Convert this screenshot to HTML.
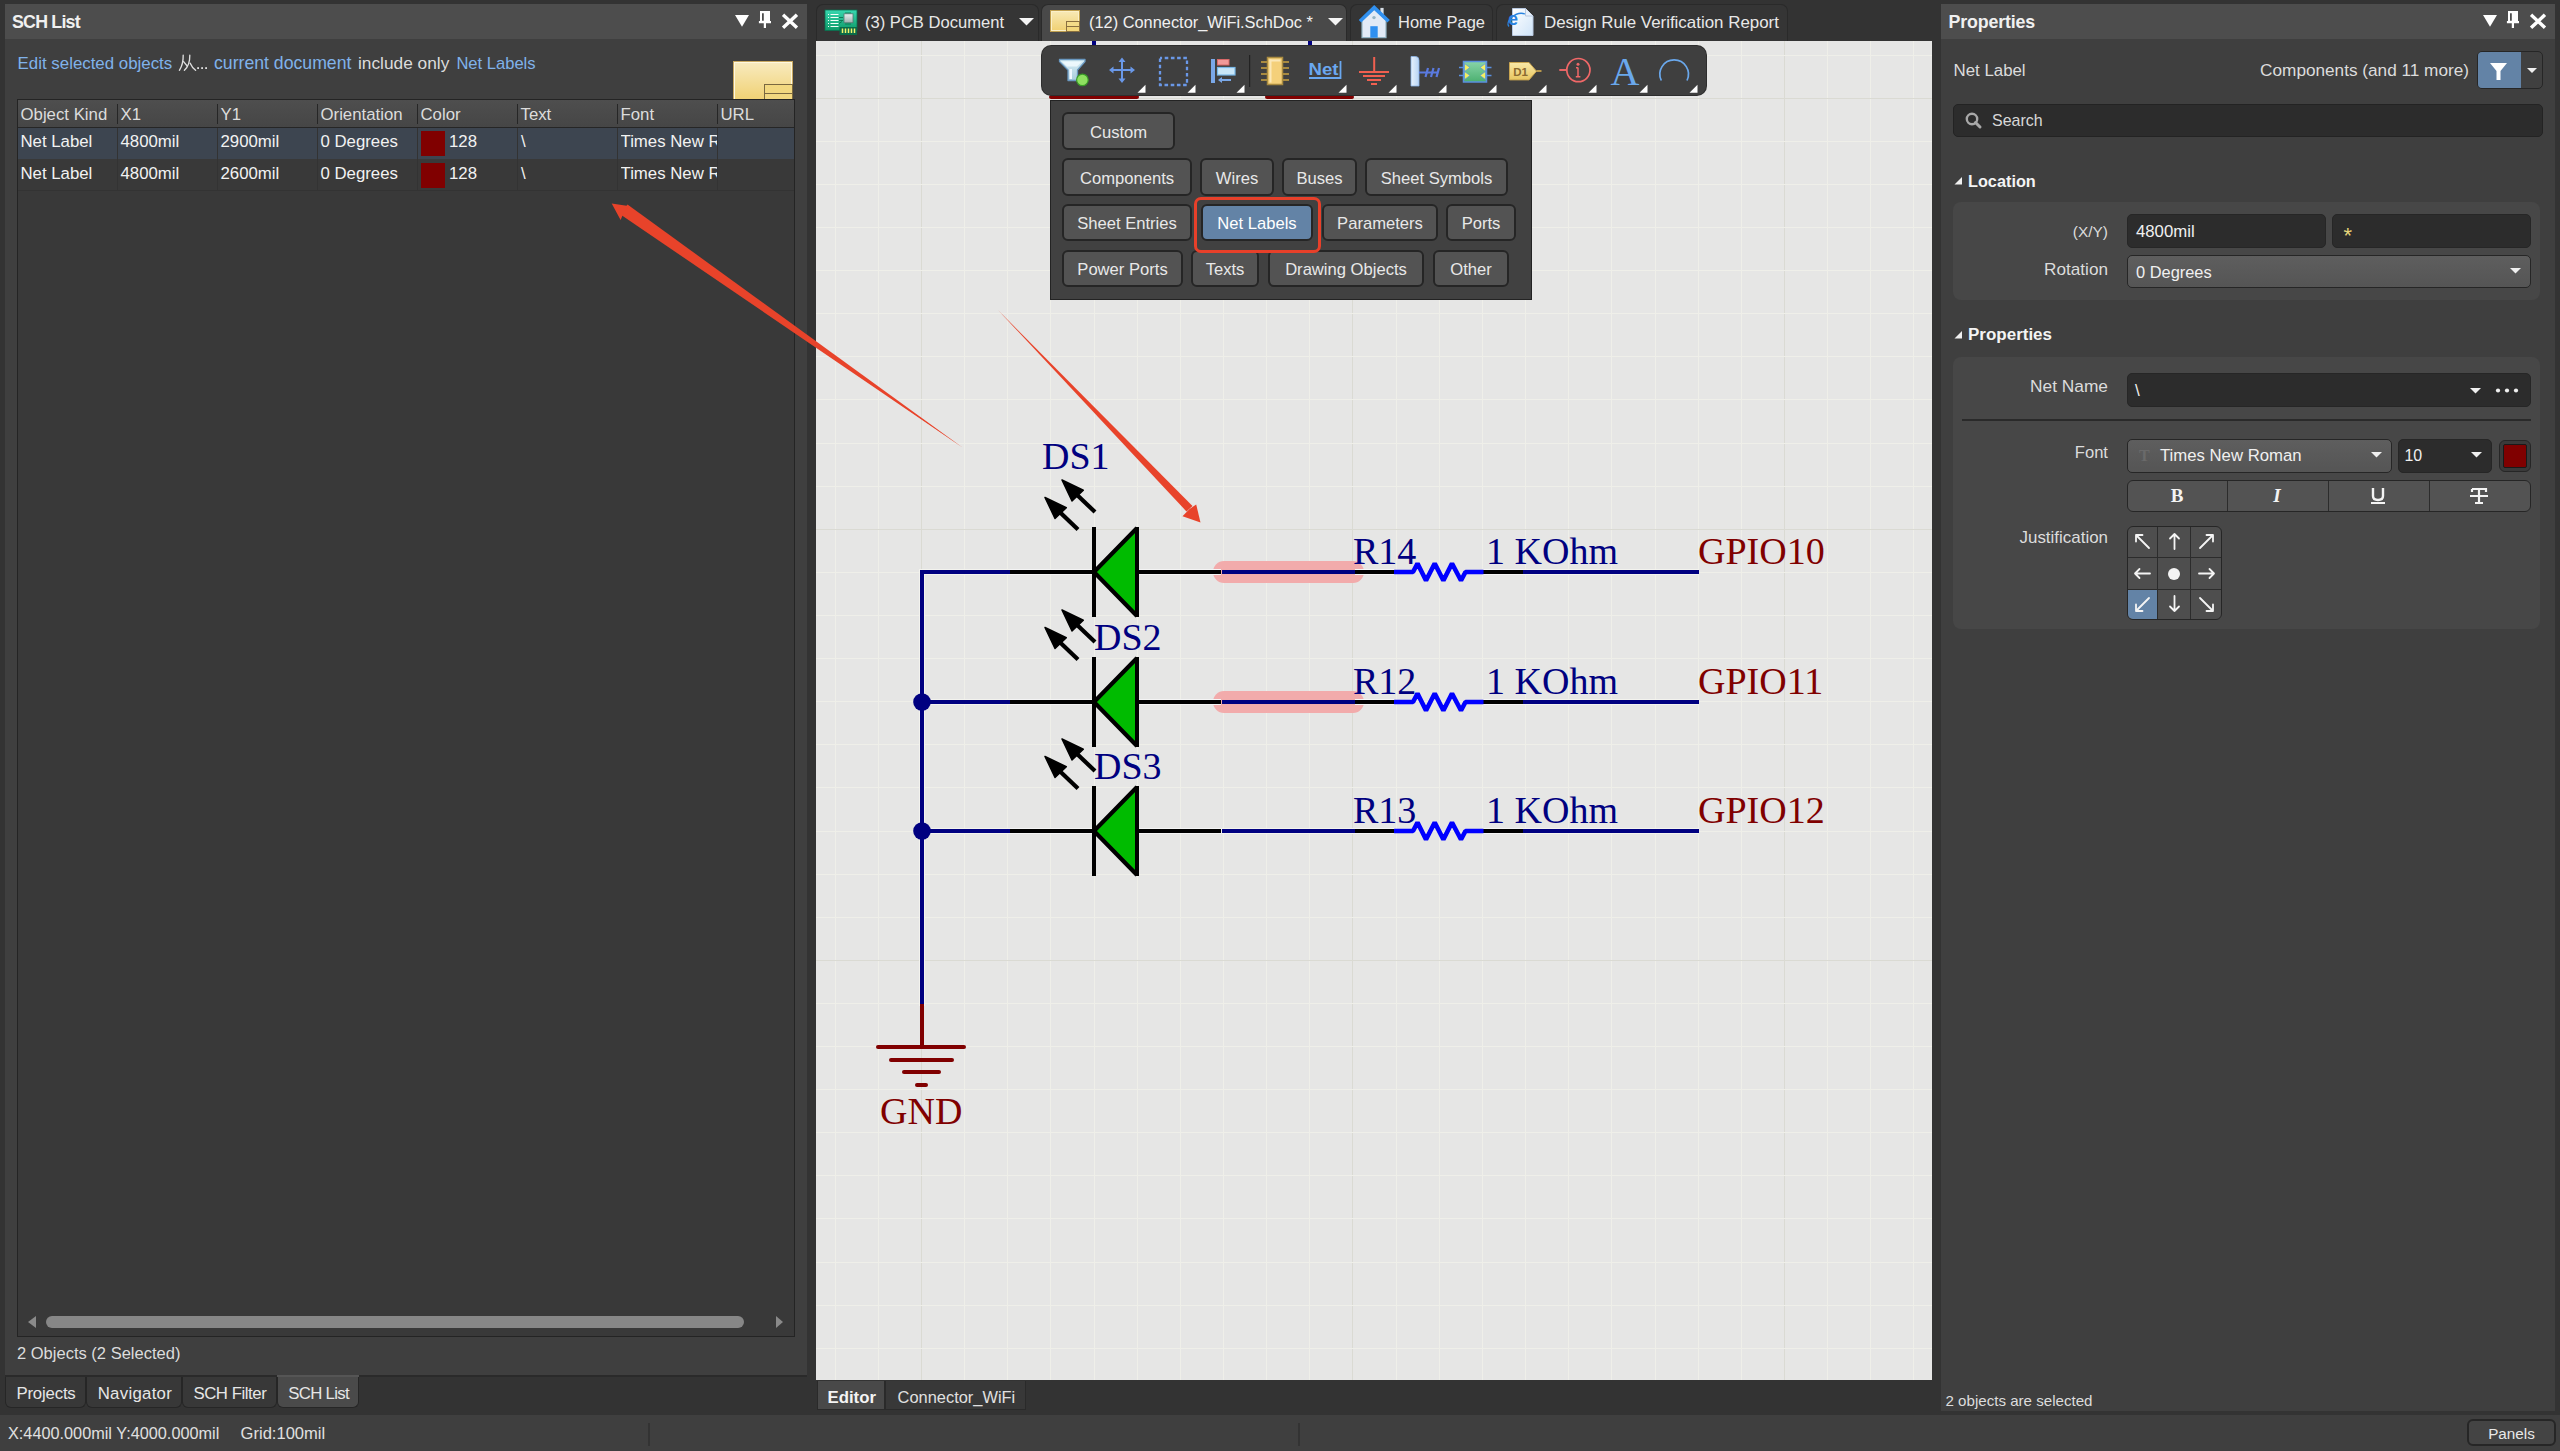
<!DOCTYPE html><html><head><meta charset="utf-8"><style>html,body{margin:0;padding:0;background:#333333;overflow:hidden}#root{position:relative;width:2560px;height:1451px;overflow:hidden;background:#333333}</style></head><body><div id="root">
<div style="position:absolute;left:5px;top:4px;width:802px;height:35px;background:#4d4d4d;"></div>
<div style="position:absolute;left:12px;top:14.00px;font:bold 17.8px/17.8px 'Liberation Sans', sans-serif;color:#f0f0f0;white-space:nowrap;letter-spacing:-0.777px;">SCH List</div>
<svg style="position:absolute;left:730px;top:8px" width="72" height="26" viewBox="730 8 72 26">
      <path d="M735 15 L749 15 L742 26.7 Z" fill="#ffffff"/>
      <path d="M760 11 h10 v10.1 h1 v2.1 h-5 v4.8 h-2.2 v-4.8 h-4.9 v-2.1 h1.1 z M762 13.2 v7.5 h1.8 v-7.5 z" fill="#ffffff" fill-rule="evenodd"/>
      <path d="M784.3000000000002 16 L795.6999999999998 26.6 M795.6999999999998 16 L784.3000000000002 26.6" stroke="#ffffff" stroke-width="3.4" stroke-linecap="square"/>
    </svg>
<div style="position:absolute;left:5px;top:39px;width:802px;height:1337px;background:#3f3f3f;"></div>
<div style="position:absolute;left:17.6px;top:55.70px;font:normal 16.87px/16.87px 'Liberation Sans', sans-serif;color:#80b2ea;white-space:nowrap;">Edit selected objects</div>
<svg style="position:absolute;left:176px;top:52px" width="36" height="22" viewBox="176 52 36 22">
      <g fill="none" stroke="#dedede" stroke-width="1.35" stroke-linecap="round">
        <path d="M183.2 55.2 Q183.4 64 179.4 70.3"/>
        <path d="M183.6 61.6 L187.4 66.2"/>
        <path d="M189.8 55.2 Q190 65 184.4 70.3"/>
        <path d="M190.2 63.2 Q192 67.5 195.6 70.3"/>
      </g>
      <rect x="197.2" y="67.2" width="1.8" height="1.8" fill="#dedede"/>
      <rect x="201.2" y="67.2" width="1.8" height="1.8" fill="#dedede"/>
      <rect x="205.2" y="67.2" width="1.8" height="1.8" fill="#dedede"/>
    </svg>
<div style="position:absolute;left:214px;top:54.70px;font:normal 17.66px/17.66px 'Liberation Sans', sans-serif;color:#80b2ea;white-space:nowrap;">current document</div>
<div style="position:absolute;left:358px;top:54.70px;font:normal 17.31px/17.31px 'Liberation Sans', sans-serif;color:#dcdcdc;white-space:nowrap;">include only</div>
<div style="position:absolute;left:456.4px;top:55.70px;font:normal 16.57px/16.57px 'Liberation Sans', sans-serif;color:#80b2ea;white-space:nowrap;">Net Labels</div>
<svg style="position:absolute;left:732px;top:60px" width="63" height="40" viewBox="732 60 63 40">
      <defs><linearGradient id="yd" x1="0" y1="0" x2="0" y2="1"><stop offset="0" stop-color="#f8ebc0"/><stop offset="1" stop-color="#f0d070"/></linearGradient></defs>
      <rect x="733.5" y="61.5" width="59" height="40" fill="url(#yd)" stroke="#c8a860" stroke-width="1"/>
      <rect x="734.5" y="62.5" width="57" height="38" fill="none" stroke="#fff8e0" stroke-width="1"/>
      <rect x="764.5" y="84.5" width="28" height="9" fill="#f2d880" stroke="#7a6840" stroke-width="1"/>
      <rect x="764.5" y="93.5" width="28" height="9" fill="#f2d880" stroke="#7a6840" stroke-width="1"/>
    </svg>
<div style="position:absolute;left:17px;top:99px;width:778px;height:1238px;background:#393939;box-sizing:border-box;border:1px solid #242424;"></div>
<div style="position:absolute;left:18px;top:100px;width:776px;height:27px;background:linear-gradient(#4e4e4e,#464646);"></div>
<div style="position:absolute;left:18px;top:127px;width:776px;height:1px;background:#262626;"></div>
<div style="position:absolute;left:18px;top:128px;width:776px;height:31px;background:#3d4550;"></div>
<div style="position:absolute;left:18px;top:190px;width:776px;height:1px;background:#333333;"></div>
<div style="position:absolute;left:20.5px;top:106.90px;font:normal 16.8px/16.8px 'Liberation Sans', sans-serif;color:#dcdcdc;white-space:nowrap;">Object Kind</div>
<div style="position:absolute;left:120.5px;top:106.90px;font:normal 16.8px/16.8px 'Liberation Sans', sans-serif;color:#dcdcdc;white-space:nowrap;">X1</div>
<div style="position:absolute;left:117px;top:104px;width:1px;height:20px;background:#262626;"></div>
<div style="position:absolute;left:117px;top:128px;width:1px;height:63px;background:#333333;"></div>
<div style="position:absolute;left:220.5px;top:106.90px;font:normal 16.8px/16.8px 'Liberation Sans', sans-serif;color:#dcdcdc;white-space:nowrap;">Y1</div>
<div style="position:absolute;left:217px;top:104px;width:1px;height:20px;background:#262626;"></div>
<div style="position:absolute;left:217px;top:128px;width:1px;height:63px;background:#333333;"></div>
<div style="position:absolute;left:320.5px;top:106.90px;font:normal 16.8px/16.8px 'Liberation Sans', sans-serif;color:#dcdcdc;white-space:nowrap;">Orientation</div>
<div style="position:absolute;left:317px;top:104px;width:1px;height:20px;background:#262626;"></div>
<div style="position:absolute;left:317px;top:128px;width:1px;height:63px;background:#333333;"></div>
<div style="position:absolute;left:420.5px;top:106.90px;font:normal 16.8px/16.8px 'Liberation Sans', sans-serif;color:#dcdcdc;white-space:nowrap;">Color</div>
<div style="position:absolute;left:417px;top:104px;width:1px;height:20px;background:#262626;"></div>
<div style="position:absolute;left:417px;top:128px;width:1px;height:63px;background:#333333;"></div>
<div style="position:absolute;left:520.5px;top:106.90px;font:normal 16.8px/16.8px 'Liberation Sans', sans-serif;color:#dcdcdc;white-space:nowrap;">Text</div>
<div style="position:absolute;left:517px;top:104px;width:1px;height:20px;background:#262626;"></div>
<div style="position:absolute;left:517px;top:128px;width:1px;height:63px;background:#333333;"></div>
<div style="position:absolute;left:620.5px;top:106.90px;font:normal 16.8px/16.8px 'Liberation Sans', sans-serif;color:#dcdcdc;white-space:nowrap;">Font</div>
<div style="position:absolute;left:617px;top:104px;width:1px;height:20px;background:#262626;"></div>
<div style="position:absolute;left:617px;top:128px;width:1px;height:63px;background:#333333;"></div>
<div style="position:absolute;left:720.5px;top:106.90px;font:normal 16.8px/16.8px 'Liberation Sans', sans-serif;color:#dcdcdc;white-space:nowrap;">URL</div>
<div style="position:absolute;left:717px;top:104px;width:1px;height:20px;background:#262626;"></div>
<div style="position:absolute;left:717px;top:128px;width:1px;height:63px;background:#333333;"></div>
<div style="position:absolute;left:20.5px;top:133.80px;font:normal 16.8px/16.8px 'Liberation Sans', sans-serif;color:#f2f2f2;white-space:nowrap;">Net Label</div>
<div style="position:absolute;left:120.5px;top:133.80px;font:normal 16.8px/16.8px 'Liberation Sans', sans-serif;color:#f2f2f2;white-space:nowrap;">4800mil</div>
<div style="position:absolute;left:220.5px;top:133.80px;font:normal 16.8px/16.8px 'Liberation Sans', sans-serif;color:#f2f2f2;white-space:nowrap;">2900mil</div>
<div style="position:absolute;left:320.5px;top:133.80px;font:normal 16.8px/16.8px 'Liberation Sans', sans-serif;color:#f2f2f2;white-space:nowrap;">0 Degrees</div>
<div style="position:absolute;left:421px;top:131px;width:24px;height:25px;background:#800000;"></div>
<div style="position:absolute;left:449px;top:133.80px;font:normal 16.8px/16.8px 'Liberation Sans', sans-serif;color:#f2f2f2;white-space:nowrap;">128</div>
<div style="position:absolute;left:521px;top:133.80px;font:normal 16.8px/16.8px 'Liberation Sans', sans-serif;color:#f2f2f2;white-space:nowrap;">\</div>
<div style="position:absolute;left:620.5px;top:133.80px;font:normal 16.8px/16.8px 'Liberation Sans', sans-serif;color:#f2f2f2;white-space:nowrap;width:96px;overflow:hidden;">Times New R</div>
<div style="position:absolute;left:20.5px;top:165.60px;font:normal 16.8px/16.8px 'Liberation Sans', sans-serif;color:#f2f2f2;white-space:nowrap;">Net Label</div>
<div style="position:absolute;left:120.5px;top:165.60px;font:normal 16.8px/16.8px 'Liberation Sans', sans-serif;color:#f2f2f2;white-space:nowrap;">4800mil</div>
<div style="position:absolute;left:220.5px;top:165.60px;font:normal 16.8px/16.8px 'Liberation Sans', sans-serif;color:#f2f2f2;white-space:nowrap;">2600mil</div>
<div style="position:absolute;left:320.5px;top:165.60px;font:normal 16.8px/16.8px 'Liberation Sans', sans-serif;color:#f2f2f2;white-space:nowrap;">0 Degrees</div>
<div style="position:absolute;left:421px;top:163px;width:24px;height:25px;background:#800000;"></div>
<div style="position:absolute;left:449px;top:165.60px;font:normal 16.8px/16.8px 'Liberation Sans', sans-serif;color:#f2f2f2;white-space:nowrap;">128</div>
<div style="position:absolute;left:521px;top:165.60px;font:normal 16.8px/16.8px 'Liberation Sans', sans-serif;color:#f2f2f2;white-space:nowrap;">\</div>
<div style="position:absolute;left:620.5px;top:165.60px;font:normal 16.8px/16.8px 'Liberation Sans', sans-serif;color:#f2f2f2;white-space:nowrap;width:96px;overflow:hidden;">Times New R</div>
<svg style="position:absolute;left:20px;top:1310px" width="775" height="25" viewBox="20 1310 775 25">
      <path d="M36 1316 L36 1328 L28 1322 Z" fill="#8a8a8a"/>
      <path d="M776 1316 L776 1328 L783 1322 Z" fill="#8a8a8a"/>
      <rect x="46" y="1316" width="698" height="12" rx="6" fill="#878787"/>
    </svg>
<div style="position:absolute;left:17px;top:1346.00px;font:normal 16.52px/16.52px 'Liberation Sans', sans-serif;color:#dcdcdc;white-space:nowrap;">2 Objects (2 Selected)</div>
<div style="position:absolute;left:5px;top:1375px;width:802px;height:2px;background:#2a2a2a;"></div>
<div style="position:absolute;left:5px;top:1377px;width:81px;height:31px;background:#383838;box-sizing:border-box;border:1.5px solid #262626;border-top:none;border-radius:0 0 6px 6px;"></div>
<div style="position:absolute;left:16.4px;top:1386.40px;font:normal 16.8px/16.8px 'Liberation Sans', sans-serif;color:#e6e6e6;white-space:nowrap;letter-spacing:-0.178px;">Projects</div>
<div style="position:absolute;left:86px;top:1377px;width:96px;height:31px;background:#383838;box-sizing:border-box;border:1.5px solid #262626;border-top:none;border-radius:0 0 6px 6px;"></div>
<div style="position:absolute;left:97.7px;top:1386.40px;font:normal 16.8px/16.8px 'Liberation Sans', sans-serif;color:#e6e6e6;white-space:nowrap;letter-spacing:0.287px;">Navigator</div>
<div style="position:absolute;left:182px;top:1377px;width:95px;height:31px;background:#383838;box-sizing:border-box;border:1.5px solid #262626;border-top:none;border-radius:0 0 6px 6px;"></div>
<div style="position:absolute;left:193.4px;top:1386.40px;font:normal 16.8px/16.8px 'Liberation Sans', sans-serif;color:#e6e6e6;white-space:nowrap;letter-spacing:-0.450px;">SCH Filter</div>
<div style="position:absolute;left:277px;top:1377px;width:82px;height:31px;background:#4a4a4a;box-sizing:border-box;border:1.5px solid #262626;border-top:none;border-radius:0 0 6px 6px;"></div>
<div style="position:absolute;left:277px;top:1375px;width:82px;height:2px;background:#555555;"></div>
<div style="position:absolute;left:288.3px;top:1386.40px;font:normal 16.8px/16.8px 'Liberation Sans', sans-serif;color:#e6e6e6;white-space:nowrap;letter-spacing:-0.697px;">SCH List</div>
<div style="position:absolute;left:816px;top:4px;width:223px;height:37px;background:#353535;box-sizing:border-box;border:1px solid #2a2a2a;border-bottom:none;border-radius:7px 7px 0 0;"></div>
<div style="position:absolute;left:1041px;top:4px;width:306px;height:37px;background:#494949;box-sizing:border-box;border:1px solid #2a2a2a;border-bottom:none;border-radius:7px 7px 0 0;"></div>
<div style="position:absolute;left:1350px;top:4px;width:143px;height:37px;background:#353535;box-sizing:border-box;border:1px solid #2a2a2a;border-bottom:none;border-radius:7px 7px 0 0;"></div>
<div style="position:absolute;left:1496px;top:4px;width:292px;height:37px;background:#353535;box-sizing:border-box;border:1px solid #2a2a2a;border-bottom:none;border-radius:7px 7px 0 0;"></div>
<div style="position:absolute;left:865px;top:14.80px;font:normal 16.57px/16.57px 'Liberation Sans', sans-serif;color:#e8e8e8;white-space:nowrap;">(3) PCB Document</div>
<div style="position:absolute;left:1089px;top:13.80px;font:normal 16.39px/16.39px 'Liberation Sans', sans-serif;color:#f0f0f0;white-space:nowrap;">(12) Connector_WiFi.SchDoc *</div>
<div style="position:absolute;left:1398px;top:13.80px;font:normal 16.48px/16.48px 'Liberation Sans', sans-serif;color:#e8e8e8;white-space:nowrap;">Home Page</div>
<div style="position:absolute;left:1544px;top:14.80px;font:normal 16.91px/16.91px 'Liberation Sans', sans-serif;color:#e8e8e8;white-space:nowrap;">Design Rule Verification Report</div>
<svg style="position:absolute;left:0;top:0" width="1800" height="45" viewBox="0 0 1800 45">
      <path d="M1019 18 L1034 18 L1026.5 25.5 Z" fill="#f4f4f4"/>
      <path d="M1328 18 L1343 18 L1335.5 25.5 Z" fill="#f4f4f4"/>
      <!-- PCB icon -->
      <defs><linearGradient id="pcbg" x1="0" y1="0" x2="0" y2="1"><stop offset="0" stop-color="#38d8b0"/><stop offset="1" stop-color="#0e9a68"/></linearGradient>
      <linearGradient id="chipg" x1="0" y1="0" x2="0" y2="1"><stop offset="0" stop-color="#e8f0f0"/><stop offset="1" stop-color="#a0b0b0"/></linearGradient>
      <linearGradient id="sdg" x1="0" y1="0" x2="0" y2="1"><stop offset="0" stop-color="#f8eab8"/><stop offset="1" stop-color="#f0d070"/></linearGradient></defs>
      <rect x="825" y="10" width="32" height="20.5" fill="url(#pcbg)" stroke="#0a7050" stroke-width="0.8"/>
      <g stroke="#f4fff8" stroke-width="1"><path d="M830.5 14.5h8M830.5 17.5h8M830.5 20.5h8M830.5 23.5h8M830.5 26.5h8"/></g>
      <g fill="#f4fff8"><rect x="828" y="14" width="1" height="1"/><rect x="828" y="17" width="1" height="1"/><rect x="828" y="20" width="1" height="1"/><rect x="828" y="23" width="1" height="1"/><rect x="828" y="26" width="1" height="1"/></g>
      <g stroke="#0a6a48" stroke-width="0.8" fill="none"><path d="M839 17.5 h4 M839 20.5 h4 M839 23.5 l3 -2 M846 12v2 M848 12v2 M850 12v2 M846 23v2 M848 23v2 M850 23v2"/></g>
      <rect x="844" y="13.8" width="9" height="9" fill="url(#chipg)" stroke="#507870" stroke-width="0.8"/>
      <rect x="839.5" y="27" width="17.5" height="8" fill="#0a6a48"/>
      <g stroke="#f4f46a" stroke-width="1.5"><path d="M842.5 28.5v4.5M845.5 28.5v4.5M848.5 28.5v4.5M851.5 28.5v4.5M854.5 28.5v4.5"/></g>
      <!-- sch doc icon -->
      <rect x="1050.5" y="10.5" width="29" height="21" fill="url(#sdg)" stroke="#c0a050" stroke-width="1"/>
      <rect x="1051.5" y="11.5" width="27" height="19" fill="none" stroke="#fbf0c8" stroke-width="1"/>
      <rect x="1066.5" y="21.5" width="13" height="5" fill="#f4dc88" stroke="#8a7040" stroke-width="1"/>
      <rect x="1066.5" y="26.5" width="13" height="5" fill="#f2d67a" stroke="#8a7040" stroke-width="1"/>
      <!-- home icon -->
      <path d="M1362 20 L1374.2 9 L1386 20 L1386 37.7 L1362 37.7 Z" fill="#e2eaf6" stroke="#94b4c4" stroke-width="1.2"/>
      <rect x="1380.4" y="7.9" width="3.2" height="7" fill="#d8e0e8"/>
      <path d="M1360 21.2 L1374.2 7.6 L1388.6 21.2" fill="none" stroke="#3090f0" stroke-width="3.6" stroke-linejoin="miter"/>
      <circle cx="1374" cy="17.6" r="1.7" fill="#94b4c4"/>
      <rect x="1370.3" y="26.2" width="7.4" height="11.5" fill="#3090f0"/>
      <!-- DRV icon -->
      <defs><linearGradient id="pgg" x1="0" y1="0" x2="1" y2="1"><stop offset="0" stop-color="#ffffff"/><stop offset="1" stop-color="#cfe4f8"/></linearGradient></defs>
      <path d="M1512.5 8.5 h13 l7.5 7.5 v19.5 h-20.5 z" fill="url(#pgg)" stroke="#b8c8e0" stroke-width="1"/>
      <path d="M1525.5 8.5 v7.5 h7.5" fill="#e8f0fa" stroke="#b8c8e0" stroke-width="1"/>
      <text x="1508.2" y="24.8" font-family="Liberation Sans" font-weight="bold" font-size="17.5" fill="#2a84e0">e</text>
      <path d="M1509 26.5 q-3 -3.5 2.5 -9 q7 -6 13.5 -3.5" fill="none" stroke="#2a84e0" stroke-width="1.3"/>
      <path d="M1508.2 17.8 h10.5" stroke="#2a84e0" stroke-width="0"/>
    </svg>
<svg style="position:absolute;left:816px;top:41px" width="1116" height="1339" viewBox="816 41 1116 1339" shape-rendering="auto">
<rect x="816" y="41" width="1116" height="1339" fill="#e6e6e5"/>
<rect x="835" y="41" width="1" height="1339" fill="#efefe9"/>
<rect x="878" y="41" width="1" height="1339" fill="#efefe9"/>
<rect x="921" y="41" width="1" height="1339" fill="#dadad3"/>
<rect x="964" y="41" width="1" height="1339" fill="#efefe9"/>
<rect x="1007" y="41" width="1" height="1339" fill="#efefe9"/>
<rect x="1050" y="41" width="1" height="1339" fill="#efefe9"/>
<rect x="1094" y="41" width="1" height="1339" fill="#efefe9"/>
<rect x="1137" y="41" width="1" height="1339" fill="#efefe9"/>
<rect x="1180" y="41" width="1" height="1339" fill="#efefe9"/>
<rect x="1223" y="41" width="1" height="1339" fill="#efefe9"/>
<rect x="1266" y="41" width="1" height="1339" fill="#efefe9"/>
<rect x="1309" y="41" width="1" height="1339" fill="#efefe9"/>
<rect x="1352" y="41" width="1" height="1339" fill="#dadad3"/>
<rect x="1396" y="41" width="1" height="1339" fill="#efefe9"/>
<rect x="1439" y="41" width="1" height="1339" fill="#efefe9"/>
<rect x="1482" y="41" width="1" height="1339" fill="#efefe9"/>
<rect x="1525" y="41" width="1" height="1339" fill="#efefe9"/>
<rect x="1568" y="41" width="1" height="1339" fill="#efefe9"/>
<rect x="1611" y="41" width="1" height="1339" fill="#efefe9"/>
<rect x="1655" y="41" width="1" height="1339" fill="#efefe9"/>
<rect x="1698" y="41" width="1" height="1339" fill="#efefe9"/>
<rect x="1741" y="41" width="1" height="1339" fill="#efefe9"/>
<rect x="1784" y="41" width="1" height="1339" fill="#dadad3"/>
<rect x="1827" y="41" width="1" height="1339" fill="#efefe9"/>
<rect x="1870" y="41" width="1" height="1339" fill="#efefe9"/>
<rect x="1913" y="41" width="1" height="1339" fill="#efefe9"/>
<rect x="816" y="55" width="1116" height="1" fill="#efefe9"/>
<rect x="816" y="98" width="1116" height="1" fill="#dadad3"/>
<rect x="816" y="141" width="1116" height="1" fill="#efefe9"/>
<rect x="816" y="184" width="1116" height="1" fill="#efefe9"/>
<rect x="816" y="227" width="1116" height="1" fill="#efefe9"/>
<rect x="816" y="270" width="1116" height="1" fill="#efefe9"/>
<rect x="816" y="313" width="1116" height="1" fill="#efefe9"/>
<rect x="816" y="356" width="1116" height="1" fill="#efefe9"/>
<rect x="816" y="399" width="1116" height="1" fill="#efefe9"/>
<rect x="816" y="443" width="1116" height="1" fill="#efefe9"/>
<rect x="816" y="486" width="1116" height="1" fill="#efefe9"/>
<rect x="816" y="529" width="1116" height="1" fill="#dadad3"/>
<rect x="816" y="572" width="1116" height="1" fill="#efefe9"/>
<rect x="816" y="615" width="1116" height="1" fill="#efefe9"/>
<rect x="816" y="658" width="1116" height="1" fill="#efefe9"/>
<rect x="816" y="701" width="1116" height="1" fill="#efefe9"/>
<rect x="816" y="744" width="1116" height="1" fill="#efefe9"/>
<rect x="816" y="787" width="1116" height="1" fill="#efefe9"/>
<rect x="816" y="831" width="1116" height="1" fill="#efefe9"/>
<rect x="816" y="874" width="1116" height="1" fill="#efefe9"/>
<rect x="816" y="917" width="1116" height="1" fill="#efefe9"/>
<rect x="816" y="960" width="1116" height="1" fill="#dadad3"/>
<rect x="816" y="1003" width="1116" height="1" fill="#efefe9"/>
<rect x="816" y="1046" width="1116" height="1" fill="#efefe9"/>
<rect x="816" y="1089" width="1116" height="1" fill="#efefe9"/>
<rect x="816" y="1132" width="1116" height="1" fill="#efefe9"/>
<rect x="816" y="1175" width="1116" height="1" fill="#efefe9"/>
<rect x="816" y="1218" width="1116" height="1" fill="#efefe9"/>
<rect x="816" y="1262" width="1116" height="1" fill="#efefe9"/>
<rect x="816" y="1305" width="1116" height="1" fill="#efefe9"/>
<rect x="816" y="1348" width="1116" height="1" fill="#efefe9"/>
<rect x="1213" y="561" width="151" height="22" rx="11" fill="#f2abab"/>
<rect x="1213" y="691" width="151" height="22" rx="11" fill="#f2abab"/>
<rect x="919" y="569" width="6" height="437" fill="#f3f3ee"/>
<rect x="919" y="569" width="91" height="6" fill="#f3f3ee"/>
<rect x="1010" y="569" width="84" height="6" fill="#f4f4f4"/>
<rect x="1139" y="569" width="82" height="6" fill="#f4f4f4"/>
<rect x="1355" y="569" width="40" height="6" fill="#f4f4f4"/>
<rect x="1483" y="569" width="40" height="6" fill="#f4f4f4"/>
<rect x="1523" y="569" width="176" height="6" fill="#f3f3ee"/>
<rect x="919" y="699" width="91" height="6" fill="#f3f3ee"/>
<rect x="1010" y="699" width="84" height="6" fill="#f4f4f4"/>
<rect x="1139" y="699" width="82" height="6" fill="#f4f4f4"/>
<rect x="1355" y="699" width="40" height="6" fill="#f4f4f4"/>
<rect x="1483" y="699" width="40" height="6" fill="#f4f4f4"/>
<rect x="1523" y="699" width="176" height="6" fill="#f3f3ee"/>
<rect x="919" y="828" width="91" height="6" fill="#f3f3ee"/>
<rect x="1010" y="828" width="84" height="6" fill="#f4f4f4"/>
<rect x="1139" y="828" width="82" height="6" fill="#f4f4f4"/>
<rect x="1355" y="828" width="40" height="6" fill="#f4f4f4"/>
<rect x="1483" y="828" width="40" height="6" fill="#f4f4f4"/>
<rect x="1523" y="828" width="176" height="6" fill="#f3f3ee"/>
<rect x="1221" y="828" width="134" height="6" fill="#f3f3ee"/>
<rect x="920" y="570" width="4" height="435" fill="#000080"/>
<rect x="920" y="570" width="90" height="4" fill="#000080"/>
<rect x="1010" y="570" width="84" height="4" fill="#000"/>
<rect x="1137" y="570" width="84" height="4" fill="#000"/>
<rect x="1222" y="570" width="133" height="4" fill="#000080"/>
<rect x="1355" y="570" width="40" height="4" fill="#000"/>
<rect x="1483" y="570" width="40" height="4" fill="#000"/>
<rect x="1523" y="570" width="176" height="4" fill="#000080"/>
<path d="M1394 572 L1413 572 L1417.5 563.5 L1426 580.5 L1434.7 563.5 L1443.4 580.5 L1452 563.5 L1461 580.5 L1465.5 572 L1483.5 572" fill="none" stroke="#0000ff" stroke-width="4.6" stroke-linejoin="bevel"/>
<path d="M1137 528 L1137 616 L1094 572 Z" fill="#00bb00"/>
<path d="M1137 528 L1094 572 L1137 616" fill="none" stroke="#000" stroke-width="4.2" stroke-linejoin="miter" stroke-linecap="butt"/>
<rect x="1092" y="527" width="4" height="90" fill="#000"/>
<rect x="1135" y="527" width="4" height="90" fill="#000"/>
<path d="M1095 512 L1074 492" stroke="#000" stroke-width="4.2" stroke-linecap="butt"/>
<path d="M1062 480 L1083.3 490.3 L1072 501 Z" fill="#000" stroke="#000" stroke-width="1.5" stroke-linejoin="round"/>
<path d="M1078 529.6 L1057 509.4" stroke="#000" stroke-width="4.2" stroke-linecap="butt"/>
<path d="M1045 497.4 L1066.3 507.7 L1055 518.4 Z" fill="#000" stroke="#000" stroke-width="1.5" stroke-linejoin="round"/>
<rect x="920" y="700" width="90" height="4" fill="#000080"/>
<rect x="1010" y="700" width="84" height="4" fill="#000"/>
<rect x="1137" y="700" width="84" height="4" fill="#000"/>
<rect x="1222" y="700" width="133" height="4" fill="#000080"/>
<rect x="1355" y="700" width="40" height="4" fill="#000"/>
<rect x="1483" y="700" width="40" height="4" fill="#000"/>
<rect x="1523" y="700" width="176" height="4" fill="#000080"/>
<path d="M1394 702 L1413 702 L1417.5 693.5 L1426 710.5 L1434.7 693.5 L1443.4 710.5 L1452 693.5 L1461 710.5 L1465.5 702 L1483.5 702" fill="none" stroke="#0000ff" stroke-width="4.6" stroke-linejoin="bevel"/>
<path d="M1137 658 L1137 746 L1094 702 Z" fill="#00bb00"/>
<path d="M1137 658 L1094 702 L1137 746" fill="none" stroke="#000" stroke-width="4.2" stroke-linejoin="miter" stroke-linecap="butt"/>
<rect x="1092" y="657" width="4" height="90" fill="#000"/>
<rect x="1135" y="657" width="4" height="90" fill="#000"/>
<path d="M1095 642 L1074 622" stroke="#000" stroke-width="4.2" stroke-linecap="butt"/>
<path d="M1062 610 L1083.3 620.3 L1072 631 Z" fill="#000" stroke="#000" stroke-width="1.5" stroke-linejoin="round"/>
<path d="M1078 659.6 L1057 639.4" stroke="#000" stroke-width="4.2" stroke-linecap="butt"/>
<path d="M1045 627.4 L1066.3 637.6999999999999 L1055 648.4 Z" fill="#000" stroke="#000" stroke-width="1.5" stroke-linejoin="round"/>
<circle cx="922" cy="702" r="8.8" fill="#000080"/>
<rect x="920" y="829" width="90" height="4" fill="#000080"/>
<rect x="1010" y="829" width="84" height="4" fill="#000"/>
<rect x="1137" y="829" width="84" height="4" fill="#000"/>
<rect x="1222" y="829" width="133" height="4" fill="#000080"/>
<rect x="1355" y="829" width="40" height="4" fill="#000"/>
<rect x="1483" y="829" width="40" height="4" fill="#000"/>
<rect x="1523" y="829" width="176" height="4" fill="#000080"/>
<path d="M1394 831 L1413 831 L1417.5 822.5 L1426 839.5 L1434.7 822.5 L1443.4 839.5 L1452 822.5 L1461 839.5 L1465.5 831 L1483.5 831" fill="none" stroke="#0000ff" stroke-width="4.6" stroke-linejoin="bevel"/>
<path d="M1137 787 L1137 875 L1094 831 Z" fill="#00bb00"/>
<path d="M1137 787 L1094 831 L1137 875" fill="none" stroke="#000" stroke-width="4.2" stroke-linejoin="miter" stroke-linecap="butt"/>
<rect x="1092" y="786" width="4" height="90" fill="#000"/>
<rect x="1135" y="786" width="4" height="90" fill="#000"/>
<path d="M1095 771 L1074 751" stroke="#000" stroke-width="4.2" stroke-linecap="butt"/>
<path d="M1062 739 L1083.3 749.3 L1072 760 Z" fill="#000" stroke="#000" stroke-width="1.5" stroke-linejoin="round"/>
<path d="M1078 788.6 L1057 768.4" stroke="#000" stroke-width="4.2" stroke-linecap="butt"/>
<path d="M1045 756.4 L1066.3 766.6999999999999 L1055 777.4 Z" fill="#000" stroke="#000" stroke-width="1.5" stroke-linejoin="round"/>
<circle cx="922" cy="831" r="8.8" fill="#000080"/>
<rect x="920" y="1004" width="4" height="44" fill="#800000"/>
<rect x="876" y="1045" width="90" height="4" rx="2" fill="#800000"/>
<rect x="889" y="1058" width="65" height="4" rx="2" fill="#800000"/>
<rect x="902" y="1070" width="39" height="4" rx="2" fill="#800000"/>
<rect x="915" y="1083" width="13" height="4" rx="2" fill="#800000"/>
</svg>
<div style="position:absolute;left:1042px;top:437.00px;font:normal 38px/38px 'Liberation Serif', serif;color:#000080;white-space:nowrap;">DS1</div>
<div style="position:absolute;left:1094px;top:617.80px;font:normal 38px/38px 'Liberation Serif', serif;color:#000080;white-space:nowrap;">DS2</div>
<div style="position:absolute;left:1094px;top:746.50px;font:normal 38px/38px 'Liberation Serif', serif;color:#000080;white-space:nowrap;">DS3</div>
<div style="position:absolute;left:1353px;top:531.70px;font:normal 38px/38px 'Liberation Serif', serif;color:#000080;white-space:nowrap;">R14</div>
<div style="position:absolute;left:1486px;top:531.70px;font:normal 38px/38px 'Liberation Serif', serif;color:#000080;white-space:nowrap;">1 KOhm</div>
<div style="position:absolute;left:1698px;top:531.70px;font:normal 38px/38px 'Liberation Serif', serif;color:#800000;white-space:nowrap;">GPIO10</div>
<div style="position:absolute;left:1353px;top:661.70px;font:normal 38px/38px 'Liberation Serif', serif;color:#000080;white-space:nowrap;">R12</div>
<div style="position:absolute;left:1486px;top:661.70px;font:normal 38px/38px 'Liberation Serif', serif;color:#000080;white-space:nowrap;">1 KOhm</div>
<div style="position:absolute;left:1698px;top:661.70px;font:normal 38px/38px 'Liberation Serif', serif;color:#800000;white-space:nowrap;">GPIO11</div>
<div style="position:absolute;left:1353px;top:790.70px;font:normal 38px/38px 'Liberation Serif', serif;color:#000080;white-space:nowrap;">R13</div>
<div style="position:absolute;left:1486px;top:790.70px;font:normal 38px/38px 'Liberation Serif', serif;color:#000080;white-space:nowrap;">1 KOhm</div>
<div style="position:absolute;left:1698px;top:790.70px;font:normal 38px/38px 'Liberation Serif', serif;color:#800000;white-space:nowrap;">GPIO12</div>
<div style="position:absolute;left:880px;top:1092.00px;font:normal 38px/38px 'Liberation Serif', serif;color:#800000;white-space:nowrap;">GND</div>
<div style="position:absolute;left:1092px;top:41px;width:4px;height:6px;background:#000080;"></div>
<div style="position:absolute;left:1308px;top:41px;width:4px;height:6px;background:#000080;"></div>
<div style="position:absolute;left:1049px;top:95px;width:90px;height:4px;background:#800000;border-radius:2px;"></div>
<div style="position:absolute;left:1265px;top:95px;width:89px;height:4px;background:#800000;border-radius:2px;"></div>
<div style="position:absolute;left:1042px;top:46px;width:664px;height:49px;background:#3f3f3f;border-radius:9px;box-shadow:0 0 0 1px #2e2e2e;"></div>
<svg style="position:absolute;left:1042px;top:46px" width="664" height="49" viewBox="1042 46 664 49">
    <defs>
      <linearGradient id="fgr" x1="0" y1="0" x2="0" y2="1"><stop offset="0" stop-color="#d8eef6"/><stop offset="1" stop-color="#a8ccdc"/></linearGradient>
      <linearGradient id="ssg" x1="0" y1="0" x2="0" y2="1"><stop offset="0" stop-color="#88d4a8"/><stop offset="1" stop-color="#4cb070"/></linearGradient>
      <linearGradient id="d1g" x1="0" y1="0" x2="0" y2="1"><stop offset="0" stop-color="#f8e8a8"/><stop offset="1" stop-color="#e8c660"/></linearGradient>
      <linearGradient id="beg" x1="0" y1="0" x2="1" y2="0"><stop offset="0" stop-color="#e8f2fc"/><stop offset="1" stop-color="#b8d4f4"/></linearGradient>
    </defs>
    <!-- filter -->
    <path d="M1059.5 59.5 h25.5 v2 l-7.5 8.5 v10.5 h-9.5 v-10.5 l-8.5 -8.5 z" fill="url(#fgr)" stroke="#6a98c0" stroke-width="1.3" stroke-linejoin="round"/>
    <path d="M1062 61.5 h20 l-5 5 h-10 z" fill="#f4fbff" opacity="0.8"/>
    <rect x="1069.5" y="69" width="2.5" height="10" fill="#f0f8ff"/>
    <circle cx="1082.4" cy="79.9" r="5.8" fill="#8ee060" stroke="#3a9a28" stroke-width="1.2"/>
    <!-- move -->
    <g stroke="#6a98e8" stroke-width="2"><path d="M1122 60 v21 M1111 70 h22"/></g>
    <g fill="#6a98e8"><path d="M1122 57.5 l-3.5 4.5 h7z M1122 83 l-3.5 -4.5 h7z M1109 70 l4.5 -3.5 v7z M1135 70 l-4.5 -3.5 v7z"/></g>
    <!-- dashed rect -->
    <path d="M1160 58 h27 v27 h-27 z" fill="none" stroke="#6a98e8" stroke-width="2.3" stroke-dasharray="3.6 2.6" stroke-dashoffset="1.5"/>
    <!-- align -->
    <rect x="1211" y="59" width="4" height="24" fill="#7aa8e8"/>
    <rect x="1217.5" y="59.5" width="11.5" height="5.5" fill="#f09a9a" stroke="#d86868" stroke-width="1"/>
    <rect x="1217.5" y="67.5" width="17.5" height="7.5" fill="#c8e6f8" stroke="#78b8e8" stroke-width="1.2"/>
    <path d="M1220 80 h11" stroke="#7aa8e8" stroke-width="2"/>
    <path d="M1218 80 l4 -3 v6 z" fill="#7aa8e8"/>
    <!-- separator -->
    <rect x="1249" y="55" width="1.2" height="32" fill="#222"/>
    <!-- component -->
    <g stroke="#a88a40" stroke-width="1.8"><path d="M1261 62h6M1261 68h6M1261 74h6M1261 80h6M1283 62h6M1283 68h6M1283 74h6M1283 80h6"/></g>
    <rect x="1267.5" y="57.5" width="15" height="27" fill="#f4d07a" stroke="#a88a40" stroke-width="1.5"/>
    <rect x="1269.5" y="59.5" width="2" height="23" fill="#fbe8b8"/>
    <rect x="1269.5" y="59.5" width="11" height="2" fill="#fbe8b8"/>
    <!-- net label -->
    <text x="1308.5" y="75" font-family="Liberation Sans" font-weight="bold" font-size="16.5" fill="#6aa8f0" textLength="30" lengthAdjust="spacingAndGlyphs">Net</text>
    <path d="M1309 78 h31.5 v-17" stroke="#6aa8f0" stroke-width="1.8" fill="none"/>
    <!-- gnd -->
    <g stroke="#f06050" stroke-width="2"><path d="M1374.2 57 v15 M1359 72 h30 M1363 76 h22 M1367 80 h14 M1371 84 h6"/></g>
    <!-- bus entry / port -->
    <path d="M1411 56.5 h4.5 q3.5 0 3.5 4 v25.5 h-8 z" fill="url(#beg)" stroke="#8ab4e8" stroke-width="0.8"/>
    <path d="M1419 72.5 h6 M1424 72.5 h14" stroke="#5a7ae0" stroke-width="1.8"/>
    <g stroke="#5a7ae0" stroke-width="2.2"><path d="M1425.5 77 l2.5 -9 M1431 77 l2.5 -9 M1436.5 77 l2.5 -9"/></g>
    <!-- sheet symbol -->
    <rect x="1463.5" y="61.5" width="23" height="20.5" fill="url(#ssg)" stroke="#5a90e0" stroke-width="1.5"/>
    <path d="M1464.5 63.5 l5.5 4 l-5.5 4z M1464.5 71.5 l5.5 4 l-5.5 4z M1485.5 63.5 l-5.5 4 l5.5 4z M1485.5 71.5 l-5.5 4 l5.5 4z" fill="#f4f060" stroke="#5a90e0" stroke-width="0.7"/>
    <g stroke="#5a90e0" stroke-width="1.4"><path d="M1459 67.5h4.5M1459 75.5h4.5M1487 67.5h4.5M1487 75.5h4.5"/></g>
    <!-- D1 port -->
    <path d="M1509.5 62.5 h19.5 l7.5 8.7 l-7.5 8.7 h-19.5 z" fill="url(#d1g)" stroke="#c8a450" stroke-width="1"/>
    <path d="M1536.5 71 h5" stroke="#d8b050" stroke-width="1.6"/>
    <text x="1513.2" y="75.6" font-family="Liberation Sans" font-weight="bold" font-size="11.5" fill="#8a6a30">D1</text>
    <!-- info -->
    <circle cx="1578.4" cy="70.1" r="11.6" fill="none" stroke="#f06868" stroke-width="1.7"/>
    <path d="M1559.3 70 h7.6" stroke="#f06868" stroke-width="1.9"/>
    <circle cx="1578" cy="64.3" r="1.5" fill="#f06868"/>
    <path d="M1578 67.5 v9 M1575.8 76.7 h4.6 M1576 67.8 h2" stroke="#f06868" stroke-width="1.5"/>
    <!-- A -->
    <text x="1610.5" y="84.8" font-family="Liberation Serif" font-size="40" fill="#6aa8ec">A</text>
    <!-- arc -->
    <path d="M1661.3 80.5 A14.3 14.3 0 1 1 1687 80.5" fill="none" stroke="#6aa8ec" stroke-width="1.7"/>
    <!-- small triangles -->
    <path d="M1137.5 92.8 L1145.5 92.8 L1145.5 84.8 Z" fill="#ffffff"/><path d="M1187.5 92.8 L1195.5 92.8 L1195.5 84.8 Z" fill="#ffffff"/><path d="M1236.5 92.8 L1244.5 92.8 L1244.5 84.8 Z" fill="#ffffff"/><path d="M1338.5 92.8 L1346.5 92.8 L1346.5 84.8 Z" fill="#ffffff"/><path d="M1388.5 92.8 L1396.5 92.8 L1396.5 84.8 Z" fill="#ffffff"/><path d="M1438.5 92.8 L1446.5 92.8 L1446.5 84.8 Z" fill="#ffffff"/><path d="M1488.5 92.8 L1496.5 92.8 L1496.5 84.8 Z" fill="#ffffff"/><path d="M1538.5 92.8 L1546.5 92.8 L1546.5 84.8 Z" fill="#ffffff"/><path d="M1588.5 92.8 L1596.5 92.8 L1596.5 84.8 Z" fill="#ffffff"/><path d="M1639.5 92.8 L1647.5 92.8 L1647.5 84.8 Z" fill="#ffffff"/><path d="M1689.5 92.8 L1697.5 92.8 L1697.5 84.8 Z" fill="#ffffff"/></svg>
<div style="position:absolute;left:1050px;top:100px;width:482px;height:200px;background:#414141;box-sizing:border-box;border:1px solid #232323;"></div>
<div style="position:absolute;left:1062px;top:112px;width:113px;height:38px;background:#535353;box-sizing:border-box;border:2px solid #252525;border-radius:6px;"></div>
<div style="position:absolute;left:1118.5px;transform:translateX(-50%);top:124.80px;font:normal 16.6px/16.6px 'Liberation Sans', sans-serif;color:#e8e8e8;white-space:nowrap;">Custom</div>
<div style="position:absolute;left:1062px;top:158px;width:130px;height:38px;background:#535353;box-sizing:border-box;border:2px solid #252525;border-radius:6px;"></div>
<div style="position:absolute;left:1127.0px;transform:translateX(-50%);top:170.80px;font:normal 16.6px/16.6px 'Liberation Sans', sans-serif;color:#e8e8e8;white-space:nowrap;">Components</div>
<div style="position:absolute;left:1200px;top:158px;width:74px;height:38px;background:#535353;box-sizing:border-box;border:2px solid #252525;border-radius:6px;"></div>
<div style="position:absolute;left:1237.0px;transform:translateX(-50%);top:170.80px;font:normal 16.6px/16.6px 'Liberation Sans', sans-serif;color:#e8e8e8;white-space:nowrap;">Wires</div>
<div style="position:absolute;left:1282px;top:158px;width:75px;height:38px;background:#535353;box-sizing:border-box;border:2px solid #252525;border-radius:6px;"></div>
<div style="position:absolute;left:1319.5px;transform:translateX(-50%);top:170.80px;font:normal 16.6px/16.6px 'Liberation Sans', sans-serif;color:#e8e8e8;white-space:nowrap;">Buses</div>
<div style="position:absolute;left:1365px;top:158px;width:143px;height:38px;background:#535353;box-sizing:border-box;border:2px solid #252525;border-radius:6px;"></div>
<div style="position:absolute;left:1436.5px;transform:translateX(-50%);top:170.80px;font:normal 16.6px/16.6px 'Liberation Sans', sans-serif;color:#e8e8e8;white-space:nowrap;">Sheet Symbols</div>
<div style="position:absolute;left:1062px;top:204px;width:130px;height:37px;background:#535353;box-sizing:border-box;border:2px solid #252525;border-radius:6px;"></div>
<div style="position:absolute;left:1127.0px;transform:translateX(-50%);top:216.30px;font:normal 16.6px/16.6px 'Liberation Sans', sans-serif;color:#e8e8e8;white-space:nowrap;">Sheet Entries</div>
<div style="position:absolute;left:1201px;top:204px;width:112px;height:37px;background:#6383a6;box-sizing:border-box;border:2px solid #252525;border-radius:6px;"></div>
<div style="position:absolute;left:1257.0px;transform:translateX(-50%);top:216.30px;font:normal 16.6px/16.6px 'Liberation Sans', sans-serif;color:#ffffff;white-space:nowrap;">Net Labels</div>
<div style="position:absolute;left:1322px;top:204px;width:116px;height:37px;background:#535353;box-sizing:border-box;border:2px solid #252525;border-radius:6px;"></div>
<div style="position:absolute;left:1380.0px;transform:translateX(-50%);top:216.30px;font:normal 16.6px/16.6px 'Liberation Sans', sans-serif;color:#e8e8e8;white-space:nowrap;">Parameters</div>
<div style="position:absolute;left:1446px;top:204px;width:70px;height:37px;background:#535353;box-sizing:border-box;border:2px solid #252525;border-radius:6px;"></div>
<div style="position:absolute;left:1481.0px;transform:translateX(-50%);top:216.30px;font:normal 16.6px/16.6px 'Liberation Sans', sans-serif;color:#e8e8e8;white-space:nowrap;">Ports</div>
<div style="position:absolute;left:1062px;top:250px;width:121px;height:37px;background:#535353;box-sizing:border-box;border:2px solid #252525;border-radius:6px;"></div>
<div style="position:absolute;left:1122.5px;transform:translateX(-50%);top:262.30px;font:normal 16.6px/16.6px 'Liberation Sans', sans-serif;color:#e8e8e8;white-space:nowrap;">Power Ports</div>
<div style="position:absolute;left:1191px;top:250px;width:68px;height:37px;background:#535353;box-sizing:border-box;border:2px solid #252525;border-radius:6px;"></div>
<div style="position:absolute;left:1225.0px;transform:translateX(-50%);top:262.30px;font:normal 16.6px/16.6px 'Liberation Sans', sans-serif;color:#e8e8e8;white-space:nowrap;">Texts</div>
<div style="position:absolute;left:1268px;top:250px;width:156px;height:37px;background:#535353;box-sizing:border-box;border:2px solid #252525;border-radius:6px;"></div>
<div style="position:absolute;left:1346.0px;transform:translateX(-50%);top:262.30px;font:normal 16.6px/16.6px 'Liberation Sans', sans-serif;color:#e8e8e8;white-space:nowrap;">Drawing Objects</div>
<div style="position:absolute;left:1433px;top:250px;width:76px;height:37px;background:#535353;box-sizing:border-box;border:2px solid #252525;border-radius:6px;"></div>
<div style="position:absolute;left:1471.0px;transform:translateX(-50%);top:262.30px;font:normal 16.6px/16.6px 'Liberation Sans', sans-serif;color:#e8e8e8;white-space:nowrap;">Other</div>
<div style="position:absolute;left:1194px;top:197px;width:127px;height:56px;box-sizing:border-box;border:3px solid #e8402a;border-radius:7px;"></div>
<div style="position:absolute;left:1941px;top:4px;width:614px;height:35px;background:#4d4d4d;"></div>
<div style="position:absolute;left:1948.5px;top:14.00px;font:bold 17.8px/17.8px 'Liberation Sans', sans-serif;color:#f0f0f0;white-space:nowrap;letter-spacing:-0.136px;">Properties</div>
<svg style="position:absolute;left:2478px;top:8px" width="72" height="26" viewBox="2478 8 72 26">
      <path d="M2483 15 L2497 15 L2490 26.7 Z" fill="#ffffff"/>
      <path d="M2508 11 h10 v10.1 h1 v2.1 h-5 v4.8 h-2.2 v-4.8 h-4.9 v-2.1 h1.1 z M2510 13.2 v7.5 h1.8 v-7.5 z" fill="#ffffff" fill-rule="evenodd"/>
      <path d="M2532.3 16 L2543.7 26.6 M2543.7 16 L2532.3 26.6" stroke="#ffffff" stroke-width="3.4" stroke-linecap="square"/>
    </svg>
<div style="position:absolute;left:1941px;top:39px;width:614px;height:1372px;background:#3f3f3f;"></div>
<div style="position:absolute;left:1953.5px;top:62.80px;font:normal 16.85px/16.85px 'Liberation Sans', sans-serif;color:#dcdcdc;white-space:nowrap;">Net Label</div>
<div style="position:absolute;right:91px;text-align:right;top:61.80px;font:normal 17.19px/17.19px 'Liberation Sans', sans-serif;color:#dcdcdc;white-space:nowrap;">Components (and 11 more)</div>
<div style="position:absolute;left:2477px;top:51px;width:66px;height:38px;background:#404040;box-sizing:border-box;border:1px solid #262626;border-radius:5px;overflow:hidden;"><div style="position:absolute;left:0;top:0;width:43px;height:36px;background:#6383a6;"></div></div>
<svg style="position:absolute;left:2477px;top:51px" width="66" height="38" viewBox="2477 51 66 38">
      <path d="M2490 63 h17 l-6.5 8 v9 h-4 v-9 z" fill="#ffffff"/>
      <path d="M2527 68 h10 l-5 5 z" fill="#f0f0f0"/>
    </svg>
<div style="position:absolute;left:1953px;top:104px;width:590px;height:33px;background:#2c2c2c;box-sizing:border-box;border:1px solid #232323;border-radius:5px;"></div>
<svg style="position:absolute;left:1960px;top:108px" width="26" height="26" viewBox="1960 108 26 26">
      <circle cx="1972" cy="119" r="5.2" fill="none" stroke="#a8a8a8" stroke-width="2.4"/>
      <path d="M1975.5 122.5 L1980 127" stroke="#a8a8a8" stroke-width="3" stroke-linecap="round"/>
    </svg>
<div style="position:absolute;left:1992px;top:113.00px;font:normal 15.99px/15.99px 'Liberation Sans', sans-serif;color:#d8d8d8;white-space:nowrap;">Search</div>
<svg style="position:absolute;left:1950px;top:170px" width="20" height="20"><path d="M4.5 14.5 L12 14.5 L12 7 Z" fill="#f0f0f0"/></svg>
<svg style="position:absolute;left:1950px;top:324px" width="20" height="20"><path d="M4.5 14.5 L12 14.5 L12 7 Z" fill="#f0f0f0"/></svg>
<div style="position:absolute;left:1968px;top:172.50px;font:bold 16.28px/16.28px 'Liberation Sans', sans-serif;color:#f4f4f4;white-space:nowrap;">Location</div>
<div style="position:absolute;left:1953px;top:202px;width:587px;height:98px;background:#474747;border-radius:8px;"></div>
<div style="position:absolute;right:452px;text-align:right;top:224.00px;font:normal 15.44px/15.44px 'Liberation Sans', sans-serif;color:#dcdcdc;white-space:nowrap;">(X/Y)</div>
<div style="position:absolute;left:2127px;top:214px;width:199px;height:34px;background:#2c2c2c;box-sizing:border-box;border:1px solid #262626;border-radius:5px;"></div>
<div style="position:absolute;left:2332px;top:214px;width:199px;height:34px;background:#2c2c2c;box-sizing:border-box;border:1px solid #262626;border-radius:5px;"></div>
<div style="position:absolute;left:2136px;top:224.00px;font:normal 16.74px/16.74px 'Liberation Sans', sans-serif;color:#f0f0f0;white-space:nowrap;">4800mil</div>
<div style="position:absolute;left:2343.5px;top:225.00px;font:normal 22px/22px 'Liberation Sans', sans-serif;color:#e6d47a;white-space:nowrap;">*</div>
<div style="position:absolute;right:452px;text-align:right;top:261.00px;font:normal 17.18px/17.18px 'Liberation Sans', sans-serif;color:#dcdcdc;white-space:nowrap;">Rotation</div>
<div style="position:absolute;left:2127px;top:255px;width:404px;height:33px;background:linear-gradient(#5e5e5e,#555555);box-sizing:border-box;border:1px solid #262626;border-radius:5px;"></div>
<div style="position:absolute;left:2136px;top:264.00px;font:normal 16.42px/16.42px 'Liberation Sans', sans-serif;color:#f0f0f0;white-space:nowrap;">0 Degrees</div>
<svg style="position:absolute;left:2505px;top:262px" width="24" height="20" viewBox="2505 262 24 20"><path d="M2510 268 h11 l-5.5 5.5 z" fill="#f0f0f0"/></svg>
<div style="position:absolute;left:1968px;top:326.00px;font:bold 16.99px/16.99px 'Liberation Sans', sans-serif;color:#f4f4f4;white-space:nowrap;">Properties</div>
<div style="position:absolute;left:1953px;top:357px;width:587px;height:272px;background:#474747;border-radius:8px;"></div>
<div style="position:absolute;right:452px;text-align:right;top:378.00px;font:normal 17.33px/17.33px 'Liberation Sans', sans-serif;color:#dcdcdc;white-space:nowrap;">Net Name</div>
<div style="position:absolute;left:2127px;top:373px;width:404px;height:34px;background:#2c2c2c;box-sizing:border-box;border:1px solid #262626;border-radius:5px;"></div>
<div style="position:absolute;left:2135px;top:382.00px;font:normal 17px/17px 'Liberation Sans', sans-serif;color:#f0f0f0;white-space:nowrap;">\</div>
<svg style="position:absolute;left:2460px;top:380px" width="70" height="24" viewBox="2460 380 70 24">
      <path d="M2470 388 h11 l-5.5 5.5 z" fill="#f0f0f0"/>
      <circle cx="2498" cy="390.5" r="2.1" fill="#f0f0f0"/><circle cx="2507" cy="390.5" r="2.1" fill="#f0f0f0"/><circle cx="2516" cy="390.5" r="2.1" fill="#f0f0f0"/>
    </svg>
<div style="position:absolute;left:1962px;top:419px;width:569px;height:2px;background:#2a2a2a;"></div>
<div style="position:absolute;right:452px;text-align:right;top:445.40px;font:normal 16.6px/16.6px 'Liberation Sans', sans-serif;color:#dcdcdc;white-space:nowrap;">Font</div>
<div style="position:absolute;left:2127px;top:439px;width:265px;height:34px;background:linear-gradient(#5e5e5e,#555555);box-sizing:border-box;border:1px solid #262626;border-radius:5px;"></div>
<div style="position:absolute;left:2139px;top:448.00px;font:bold 16px/16px 'Liberation Serif', serif;color:#6a6a6a;white-space:nowrap;">T</div>
<div style="position:absolute;left:2160px;top:448.00px;font:normal 16.73px/16.73px 'Liberation Sans', sans-serif;color:#f0f0f0;white-space:nowrap;">Times New Roman</div>
<div style="position:absolute;left:2398px;top:439px;width:94px;height:34px;background:#2c2c2c;box-sizing:border-box;border:1px solid #262626;border-radius:5px;"></div>
<div style="position:absolute;left:2404.5px;top:448.00px;font:normal 15.95px/15.95px 'Liberation Sans', sans-serif;color:#f0f0f0;white-space:nowrap;">10</div>
<svg style="position:absolute;left:2360px;top:444px" width="140" height="24" viewBox="2360 444 140 24">
      <path d="M2371 452 h11 l-5.5 5.5 z" fill="#f0f0f0"/>
      <path d="M2471 452 h11 l-5.5 5.5 z" fill="#f0f0f0"/>
    </svg>
<div style="position:absolute;left:2499px;top:440px;width:32px;height:32px;background:#3a3a3a;box-sizing:border-box;border:1px solid #262626;border-radius:6px;"></div>
<div style="position:absolute;left:2503px;top:444px;width:24px;height:24px;background:#800000;box-sizing:border-box;border:1px solid #1a1a1a;border-radius:2px;"></div>
<div style="position:absolute;left:2127px;top:480px;width:404px;height:32px;background:#535353;box-sizing:border-box;border:1px solid #262626;border-radius:6px;"></div>
<div style="position:absolute;left:2227px;top:481px;width:1px;height:30px;background:#2c2c2c;"></div>
<div style="position:absolute;left:2328px;top:481px;width:1px;height:30px;background:#2c2c2c;"></div>
<div style="position:absolute;left:2429px;top:481px;width:1px;height:30px;background:#2c2c2c;"></div>
<div style="position:absolute;left:2177px;transform:translateX(-50%);top:486.00px;font:bold 19px/19px 'Liberation Serif', serif;color:#f4f4f4;white-space:nowrap;">B</div>
<div style="position:absolute;left:2277px;transform:translateX(-50%);top:486.00px;font:bold 19px/19px 'Liberation Serif', serif;color:#f4f4f4;white-space:nowrap;font-style:italic;">I</div>
<svg style="position:absolute;left:2360px;top:484px" width="140" height="26" viewBox="2360 484 140 26">
      <path d="M2373 488 v8 q0 4 5 4 q5 0 5 -4 v-8" fill="none" stroke="#f4f4f4" stroke-width="2.4"/>
      <rect x="2371" y="502" width="14" height="2" fill="#f4f4f4"/>
      <path d="M2472 489 h14 v3 M2472 489 v3 M2479 489 v14 M2475 503 h8 M2470 496 h18" fill="none" stroke="#f4f4f4" stroke-width="2.2"/>
    </svg>
<div style="position:absolute;right:452px;text-align:right;top:530.30px;font:normal 16.96px/16.96px 'Liberation Sans', sans-serif;color:#dcdcdc;white-space:nowrap;">Justification</div>
<div style="position:absolute;left:2127px;top:526px;width:95px;height:94px;background:#4e4e4e;box-sizing:border-box;border:1px solid #262626;border-radius:6px;overflow:hidden;"><div style="position:absolute;left:0;top:62px;width:30px;height:32px;background:#6383a6;"></div></div>
<div style="position:absolute;left:2157px;top:527px;width:1px;height:92px;background:#2c2c2c;"></div>
<div style="position:absolute;left:2190px;top:527px;width:1px;height:92px;background:#2c2c2c;"></div>
<div style="position:absolute;left:2128px;top:557px;width:93px;height:1px;background:#2c2c2c;"></div>
<div style="position:absolute;left:2128px;top:589px;width:93px;height:1px;background:#2c2c2c;"></div>
<svg style="position:absolute;left:2127px;top:526px" width="95" height="94" viewBox="2127 526 95 94">
      <g stroke="#f4f4f4" stroke-width="1.8" fill="none" stroke-linecap="round" stroke-linejoin="round">
        <path d="M2136 535 L2149 548 M2136 535 h6.5 M2136 535 v6.5"/>
        <path d="M2174.5 534 v15 M2174.5 534 l-4.5 4.5 M2174.5 534 l4.5 4.5"/>
        <path d="M2213 535 L2200 548 M2213 535 h-6.5 M2213 535 v6.5"/>
        <path d="M2135 573.5 h15 M2135 573.5 l4.5 -4.5 M2135 573.5 l4.5 4.5"/>
        <path d="M2214 573.5 h-15 M2214 573.5 l-4.5 -4.5 M2214 573.5 l-4.5 4.5"/>
        <path d="M2136 611 L2149 598 M2136 611 h6.5 M2136 611 v-6.5"/>
        <path d="M2174.5 611 v-15 M2174.5 611 l-4.5 -4.5 M2174.5 611 l4.5 -4.5"/>
        <path d="M2213 611 L2200 598 M2213 611 h-6.5 M2213 611 v-6.5"/>
      </g>
      <circle cx="2174" cy="574" r="6" fill="#f4f4f4"/>
    </svg>
<div style="position:absolute;left:1945.5px;top:1393.00px;font:normal 15.11px/15.11px 'Liberation Sans', sans-serif;color:#dcdcdc;white-space:nowrap;">2 objects are selected</div>
<div style="position:absolute;left:0px;top:1415px;width:2560px;height:36px;background:#3f3f3f;"></div>
<div style="position:absolute;left:8px;top:1425.00px;font:normal 16.28px/16.28px 'Liberation Sans', sans-serif;color:#e0e0e0;white-space:nowrap;">X:4400.000mil Y:4000.000mil</div>
<div style="position:absolute;left:240.6px;top:1426.00px;font:normal 16.56px/16.56px 'Liberation Sans', sans-serif;color:#e0e0e0;white-space:nowrap;">Grid:100mil</div>
<div style="position:absolute;left:648px;top:1423px;width:2px;height:23px;background:#333;"></div>
<div style="position:absolute;left:1298px;top:1423px;width:2px;height:23px;background:#333;"></div>
<div style="position:absolute;left:2467px;top:1419px;width:89px;height:27px;background:#444444;box-sizing:border-box;border:2px solid #262626;border-radius:6px;"></div>
<div style="position:absolute;left:2488.2px;top:1426.00px;font:normal 15.26px/15.26px 'Liberation Sans', sans-serif;color:#e8e8e8;white-space:nowrap;">Panels</div>
<div style="position:absolute;left:817px;top:1381px;width:68px;height:29px;background:#494949;box-sizing:border-box;border:1px solid #2a2a2a;border-top:none;"></div>
<div style="position:absolute;left:885px;top:1381px;width:141px;height:29px;background:#383838;box-sizing:border-box;border:1px solid #2a2a2a;border-top:none;"></div>
<div style="position:absolute;left:827.5px;top:1390.00px;font:bold 16.78px/16.78px 'Liberation Sans', sans-serif;color:#f4f4f4;white-space:nowrap;">Editor</div>
<div style="position:absolute;left:897.6px;top:1389.00px;font:normal 16.42px/16.42px 'Liberation Sans', sans-serif;color:#e0e0e0;white-space:nowrap;">Connector_WiFi</div>
<svg style="position:absolute;left:0;top:0;pointer-events:none" width="2560" height="1451" viewBox="0 0 2560 1451">
      <path d="M962.5 447.5 L623 208 L628 206 L624 212.5 Z" fill="#e8432a"/>
      <path d="M962.5 447.5 L620.5 214.5 L627.5 204.5 Z" fill="#e8432a"/>
      <path d="M611.7 203.5 L630 206.2 L624.5 210.8 L620.6 220 Z" fill="#e8432a"/>
      <path d="M998 310 L1186.5 511.5 L1192.5 506 Z" fill="#e8432a"/>
      <path d="M1200.5 522.5 L1182.5 516.2 L1189.5 509 L1196.2 504.5 Z" fill="#e8432a"/>
    </svg>
</div></body></html>
